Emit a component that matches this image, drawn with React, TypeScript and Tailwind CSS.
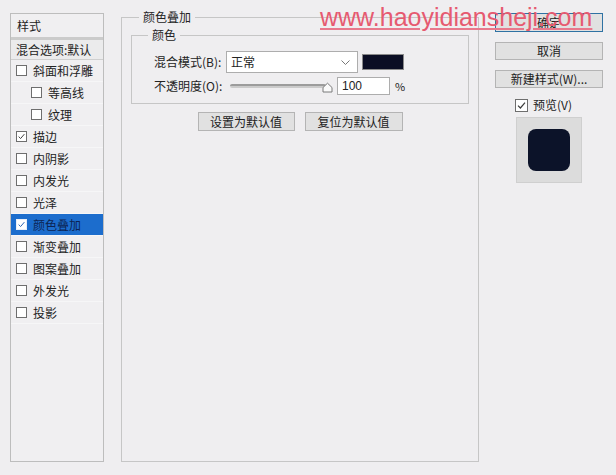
import React from "react";

const FONT = "font-['Noto_Sans_CJK_SC','Noto_Sans',sans-serif]";

function Box({ checked = false, active = false, size = 11 }: { checked?: boolean; active?: boolean; size?: number }) {
  return (
    <span
      className={`shrink-0 flex items-center justify-center bg-white border ${
        active ? "border-[#e8eef8]" : "border-[#6e6e6e]"
      }`}
      style={{ width: size, height: size }}
    >
      {checked && (
        <svg viewBox="0 0 11 11" className="w-full h-full">
          <polyline
            points="2,5.6 4.4,8 9,2.6"
            fill="none"
            stroke={active ? "#2a63b4" : "#3c3c3c"}
            strokeWidth="1.2"
          />
        </svg>
      )}
    </span>
  );
}

const ITEMS: { label: string; checked?: boolean; indent?: boolean; active?: boolean }[] = [
  { label: "斜面和浮雕" },
  { label: "等高线", indent: true },
  { label: "纹理", indent: true },
  { label: "描边", checked: true },
  { label: "内阴影" },
  { label: "内发光" },
  { label: "光泽" },
  { label: "颜色叠加", checked: true, active: true },
  { label: "渐变叠加" },
  { label: "图案叠加" },
  { label: "外发光" },
  { label: "投影" },
];

function Btn({ children, className = "" }: { children: React.ReactNode; className?: string }) {
  return (
    <button
      type="button"
      className={`flex items-center justify-center bg-[#e1e1e1] border border-[#b4b4b4] text-[12px] leading-none text-[#222] ${className}`}
    >
      {children}
    </button>
  );
}

export default function App() {
  return (
    <div className={`relative w-[616px] h-[475px] bg-[#efeef0] flex items-start text-[12px] text-[#232323] ${FONT}`}>
      {/* style list */}
      <aside className="ml-[10px] mt-[13px] w-[94px] h-[449px] border border-[#bdbdbd] bg-[#f0eff1] flex flex-col">
        <div className="h-[23px] pl-[6px] flex items-center leading-none">样式</div>
        <div className="h-[3px] bg-[#cbcbcb]" />
        <div className="h-[20px] pl-[5px] flex items-center leading-none bg-[#ebebec] border-b border-[#cfcfcf] whitespace-nowrap">
          混合选项:默认
        </div>
        {ITEMS.map((it) => (
          <div
            key={it.label}
            className={`h-[22px] flex items-center gap-[6px] leading-none border-b border-[#f6f6f7] ${
              it.indent ? "pl-[20px]" : "pl-[5px]"
            } ${it.active ? "bg-[#1c6dcd] text-[#0c2452]" : ""}`}
          >
            <Box checked={it.checked} active={it.active} />
            <span>{it.label}</span>
          </div>
        ))}
      </aside>

      {/* color overlay */}
      <fieldset className="ml-[17px] mt-[9px] w-[358px] h-[453px] border border-[#c6c6c6] p-0 min-w-0">
        <legend className="ml-[17px] px-[4px] leading-[16px]">颜色叠加</legend>
        <div className="px-[9px] pt-[2px]">
          <fieldset className="border border-[#c6c6c6] p-0 min-w-0">
            <legend className="ml-[16px] px-[4px] leading-[16px]">颜色</legend>
            <div className="pl-[22px] pt-[8px] pb-[8px]">
              <div className="flex items-center h-[22px]">
                <span className="w-[72px] leading-none whitespace-nowrap">混合模式(B):</span>
                <div className="w-[132px] h-[22px] bg-white border border-[#adadad] flex items-center pl-[4px] pr-[7px] leading-none">
                  <span className="flex-1">正常</span>
                  <svg width="9" height="5" viewBox="0 0 9 5">
                    <polyline points="0.5,0.5 4.5,4.5 8.5,0.5" fill="none" stroke="#777" strokeWidth="1" />
                  </svg>
                </div>
                <div className="ml-[4px] w-[42px] h-[16px] bg-[#0b0e24] border border-[#8a8a8a]" />
              </div>
              <div className="flex items-center h-[18px] mt-[4px]">
                <span className="w-[72px] leading-none whitespace-nowrap">不透明度(O):</span>
                <div className="relative ml-[4px] w-[103px] h-[18px] flex items-center">
                  <div className="w-[96px] h-[4px] rounded-[2px] bg-[#cbcbcb] border-t-2 border-[#9c9c9c]" />
                  <svg className="absolute right-0 top-[5px]" width="11" height="11" viewBox="0 0 11 11">
                    <path d="M1 10 V5.5 L5.5 1.2 L10 5.5 V10 Z" fill="#fafafa" stroke="#7a7a7a" strokeWidth="1" />
                  </svg>
                </div>
                <div className="ml-[4px] w-[53px] h-[18px] bg-white border border-[#adadad] flex items-center pl-[4px] leading-none font-['Liberation_Sans',sans-serif]">
                  100
                </div>
                <span className="ml-[5px] leading-none text-[11px]">%</span>
              </div>
            </div>
          </fieldset>
          <div className="mt-[8px] flex justify-center gap-[10px]">
            <Btn className="w-[97px] h-[19px]">设置为默认值</Btn>
            <Btn className="w-[98px] h-[19px]">复位为默认值</Btn>
          </div>
        </div>
      </fieldset>

      {/* actions */}
      <div className="ml-[16px] mt-[13px] w-[108px] flex flex-col items-center">
        <Btn className="w-full h-[19px] !border-[#2f72a3]">确定</Btn>
        <Btn className="w-full h-[18px] mt-[10px]">取消</Btn>
        <Btn className="w-full h-[18px] mt-[10px]">新建样式(W)...</Btn>
        <div className="self-start ml-[20px] mt-[10px] h-[14px] flex items-center gap-[5px] leading-none">
          <Box checked size={13} />
          <span>预览(V)</span>
        </div>
        <div className="mt-[5px] w-[66px] h-[66px] bg-[#dcdcdc] border border-[#cfcfcf] flex items-center justify-center">
          <div className="w-[42px] h-[42px] rounded-[8px] bg-[#0c1329]" />
        </div>
      </div>

      {/* watermark */}
      <div className="absolute left-[320px] top-[5px] text-[25px] leading-[25px] text-[#e65a70] underline decoration-[#e8788c] font-['Liberation_Sans',sans-serif] pointer-events-none">
        www.haoyidiansheji.com
      </div>
    </div>
  );
}
